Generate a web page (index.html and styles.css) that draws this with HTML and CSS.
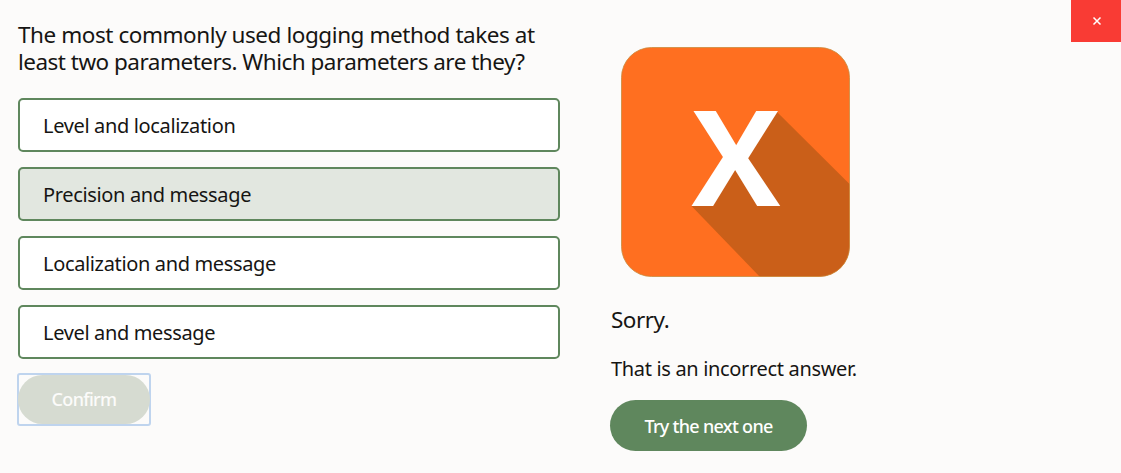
FILE: index.html
```html
<!DOCTYPE html>
<html lang="en">
<head>
<meta charset="utf-8">
<title>Quiz</title>
<link rel="stylesheet" href="styles.css">
</head>
<body>
<main class="quiz">
  <section class="question">
    <h1 class="prompt"><span class="prompt-first">The most commonly used logging method takes at</span> <span class="prompt-second">least two parameters. Which parameters are they?</span></h1>
    <ul class="options">
      <li class="option">Level and localization</li>
      <li class="option selected">Precision and message</li>
      <li class="option">Localization and message</li>
      <li class="option">Level and message</li>
    </ul>
    <button class="confirm"><span class="pill">Confirm</span></button>
  </section>
  <section class="result">
    <svg class="badge" width="229" height="230" viewBox="0 0 229 230" role="img" aria-label="Incorrect">
      <defs><clipPath id="tile"><rect x=".5" y=".5" width="228" height="229" rx="30"/></clipPath></defs>
      <rect x=".5" y=".5" width="228" height="229" rx="30" fill="#ff6f20"/>
      <path d="M155 64 L229 137.500 V230 H139 L70.500 159 L109 105Z" fill="#ca5f19" clip-path="url(#tile)"/>
      <rect x=".5" y=".5" width="228" height="229" rx="30" fill="none" stroke="#c98a3c" stroke-width=".8"/>
      <text class="cross" x="70.500" y="159">X</text>
    </svg>
    <h2 class="verdict">Sorry.</h2>
    <p class="detail">That is an incorrect answer.</p>
    <button class="next"><span>Try the next one</span></button>
  </section>
  <button class="close" aria-label="Close">
    <svg width="10" height="10" viewBox="0 0 10 10"><path d="M1.500 1.500 L8.500 8.500 M8.500 1.500 L1.500 8.500" stroke="#fff" stroke-width="1.500"/></svg>
  </button>
</main>
</body>
</html>
```
FILE: styles.css
```css
* { box-sizing: border-box; margin: 0; padding: 0; }
body { background: #fcfbfa; color: #161513; font-family: "Noto Sans", "Open Sans", sans-serif; }
button { border: 0; font: inherit; background: none; }
.quiz { display: flex; align-items: flex-start; height: 473px; overflow: hidden; }
.question { width: 560px; padding: 21px 0 0 18px; }
.prompt { height: 77px; font-size: 22.5px; font-weight: 400; line-height: 27px; white-space: nowrap; }
.prompt-first { display: block; letter-spacing: -.44px; }
.prompt-second { display: block; letter-spacing: -.51px; }
.options { display: grid; gap: 15px; list-style: none; }
.option { display: flex; align-items: center; height: 54px; padding: 1px 23px 0; border: 2px solid #5f875d; border-radius: 5px; background: #fff; font-size: 20px; letter-spacing: -.35px; }
.selected { background: #e2e7e0; }
.confirm { display: flex; width: 134px; height: 53px; margin: 14px 0 0 -1px; border: 2px solid #bfd4ee; border-radius: 3px; }
.pill { flex: 1; margin: 0 -1px; border-radius: 25px; background: #d6dbd1; color: #fcfbfa; font-size: 18px; font-weight: 500; line-height: 49px; letter-spacing: -.7px; text-align: center; }
.result { flex: 1; display: flex; flex-direction: column; align-items: flex-start; padding: 47px 0 0 50px; }
.badge { margin-left: 11px; }
.cross { fill: #fff; font: bold 133px "Open Sans", sans-serif; }
.verdict { margin: 27px 0 0 1px; font-size: 22.5px; font-weight: 400; line-height: 32px; letter-spacing: -.5px; }
.detail { margin: 18px 0 0 1px; font-size: 20px; line-height: 30px; letter-spacing: -.33px; }
.next { width: 197px; height: 51px; margin-top: 16px; border-radius: 26px; background: #5f875d; color: #fff; font-size: 18px; font-weight: 500; letter-spacing: -.7px; }
.close { display: grid; place-items: center; width: 50px; height: 42px; padding-left: 2px; background: #f93b34; }
```
